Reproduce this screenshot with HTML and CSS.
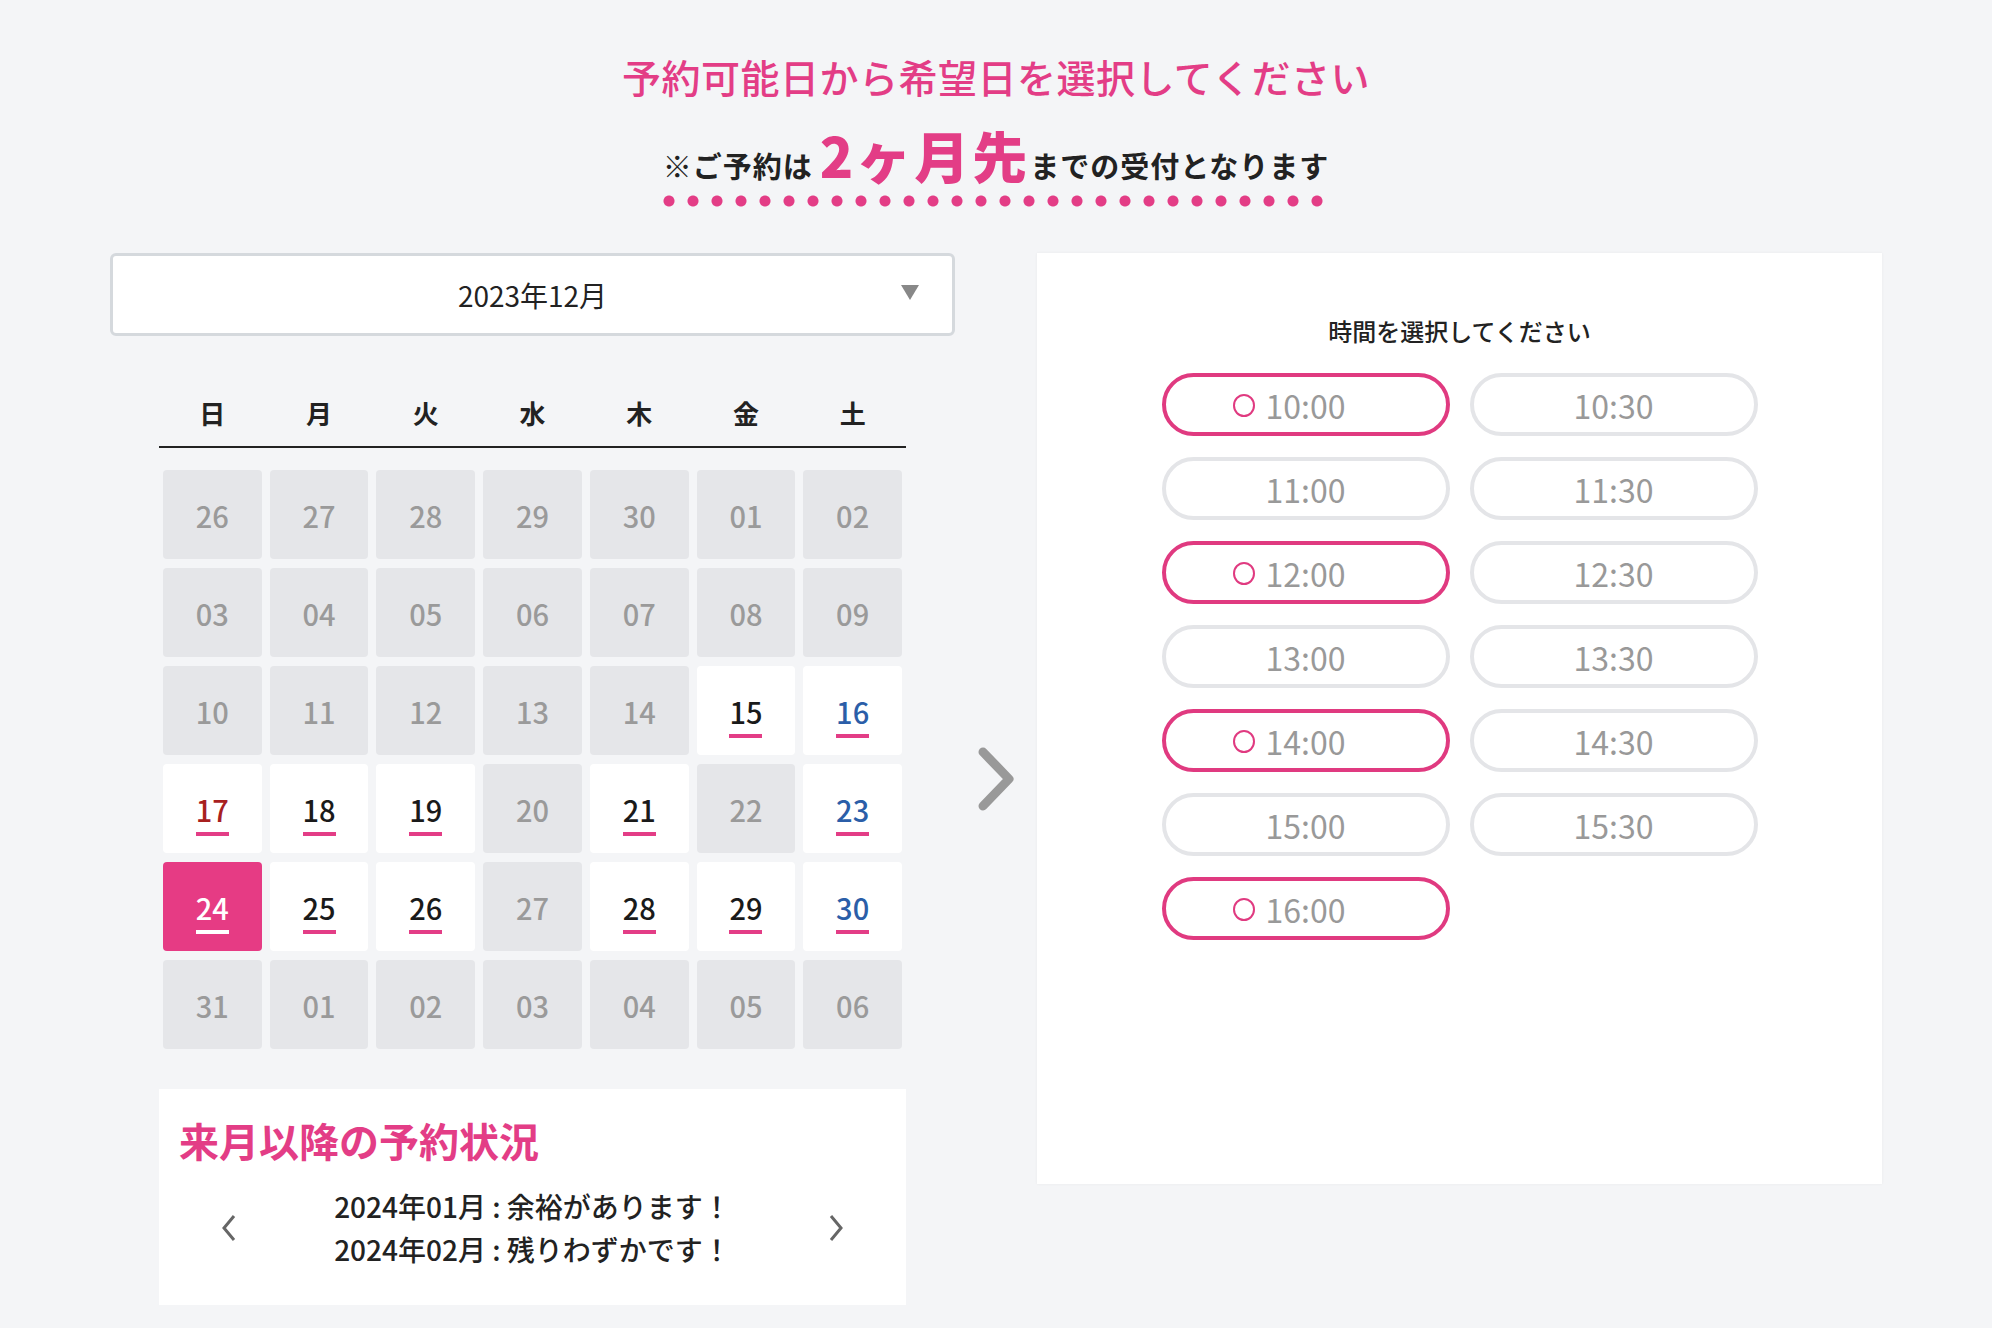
FILE: index.html
```html
<!DOCTYPE html>
<html lang="ja">
<head>
    <meta charset="UTF-8">
    <meta name="viewport" content="width=device-width, initial-scale=1.0">
    <title>予約日時の選択</title>
    <link rel="stylesheet" href="styles.css">
</head>
<body>
    <div class="page">
        <header class="intro">
            <h1>予約可能日から希望日を選択してください</h1>
            <p class="notice">※ご予約は<strong>2ヶ月先</strong>までの受付となります</p>
        </header>

        <div class="main">
            <div class="calendar-col">
                <div class="month-select">
                    2023年12月
                    <span class="caret"></span>
                </div>

                <div class="week">
                    <span>日</span><span>月</span><span>火</span><span>水</span><span>木</span><span>金</span><span>土</span>
                </div>

                <div class="days">
                    <div class="day off"><span>26</span></div>
                    <div class="day off"><span>27</span></div>
                    <div class="day off"><span>28</span></div>
                    <div class="day off"><span>29</span></div>
                    <div class="day off"><span>30</span></div>
                    <div class="day off"><span>01</span></div>
                    <div class="day off"><span>02</span></div>

                    <div class="day off"><span>03</span></div>
                    <div class="day off"><span>04</span></div>
                    <div class="day off"><span>05</span></div>
                    <div class="day off"><span>06</span></div>
                    <div class="day off"><span>07</span></div>
                    <div class="day off"><span>08</span></div>
                    <div class="day off"><span>09</span></div>

                    <div class="day off"><span>10</span></div>
                    <div class="day off"><span>11</span></div>
                    <div class="day off"><span>12</span></div>
                    <div class="day off"><span>13</span></div>
                    <div class="day off"><span>14</span></div>
                    <div class="day open"><span>15</span></div>
                    <div class="day open sat"><span>16</span></div>

                    <div class="day open sun"><span>17</span></div>
                    <div class="day open"><span>18</span></div>
                    <div class="day open"><span>19</span></div>
                    <div class="day off"><span>20</span></div>
                    <div class="day open"><span>21</span></div>
                    <div class="day off"><span>22</span></div>
                    <div class="day open sat"><span>23</span></div>

                    <div class="day open selected"><span>24</span></div>
                    <div class="day open"><span>25</span></div>
                    <div class="day open"><span>26</span></div>
                    <div class="day off"><span>27</span></div>
                    <div class="day open"><span>28</span></div>
                    <div class="day open"><span>29</span></div>
                    <div class="day open sat"><span>30</span></div>

                    <div class="day off"><span>31</span></div>
                    <div class="day off"><span>01</span></div>
                    <div class="day off"><span>02</span></div>
                    <div class="day off"><span>03</span></div>
                    <div class="day off"><span>04</span></div>
                    <div class="day off"><span>05</span></div>
                    <div class="day off"><span>06</span></div>
                </div>

                <div class="next-box">
                    <h2>来月以降の予約状況</h2>
                    <div class="next-row">
                        <svg class="small-arrow" width="16" height="30" viewBox="0 0 16 30"><polyline points="13,3 3,15 13,27" fill="none" stroke="#666" stroke-width="3"/></svg>
                        <div class="next-text">
                            <p>2024年01月 : 余裕があります！</p>
                            <p>2024年02月 : 残りわずかです！</p>
                        </div>
                        <svg class="small-arrow" width="16" height="30" viewBox="0 0 16 30"><polyline points="3,3 13,15 3,27" fill="none" stroke="#666" stroke-width="3"/></svg>
                    </div>
                </div>
            </div>

            <div class="step-arrow">
                <svg width="40" height="66" viewBox="0 0 40 66"><polyline points="7,6 33,33 7,60" fill="none" stroke="#999" stroke-width="9" stroke-linecap="round" stroke-linejoin="round"/></svg>
            </div>

            <div class="time-panel">
                <h3>時間を選択してください</h3>
                <div class="times">
                    <div class="time ok"><span>10:00</span></div>
                    <div class="time"><span>10:30</span></div>
                    <div class="time"><span>11:00</span></div>
                    <div class="time"><span>11:30</span></div>
                    <div class="time ok"><span>12:00</span></div>
                    <div class="time"><span>12:30</span></div>
                    <div class="time"><span>13:00</span></div>
                    <div class="time"><span>13:30</span></div>
                    <div class="time ok"><span>14:00</span></div>
                    <div class="time"><span>14:30</span></div>
                    <div class="time"><span>15:00</span></div>
                    <div class="time"><span>15:30</span></div>
                    <div class="time ok"><span>16:00</span></div>
                </div>
            </div>
        </div>
    </div>
</body>
</html>
```

FILE: styles.css
```css
body {
    font-family: "Noto Sans CJK JP", "Noto Sans", sans-serif;
    background-color: #f4f5f7;
    color: #222;
    margin: 0;
    padding: 0;
}

.page {
    width: 1772px;
    margin: 0 auto;
}

/* header */

.intro {
    text-align: center;
    padding-top: 48px;
}

.intro h1 {
    margin: 0;
    font-size: 39px;
    line-height: 56px;
    font-weight: 500;
    color: #e33d86;
    letter-spacing: 0.5px;
}

.notice {
    display: inline-block;
    margin: 19px 0 0;
    font-size: 29px;
    font-weight: 700;
    line-height: 62px;
    letter-spacing: 1px;
    padding-bottom: 11px;
    background-image: radial-gradient(circle, #e33d86 5px, transparent 6px);
    background-size: 24px 12px;
    background-position: -6px bottom;
    background-repeat: repeat-x;
}

.notice strong {
    font-size: 55px;
    color: #e33d86;
    letter-spacing: 3px;
    margin-left: 7px;
}

/* layout */

.main {
    display: grid;
    grid-template-columns: 845px 1fr 845px;
    align-items: start;
    margin-top: 46px;
}

/* calendar */

.month-select {
    position: relative;
    height: 83px;
    box-sizing: border-box;
    background-color: #fff;
    border: 3px solid #d5d9dd;
    border-radius: 6px;
    display: flex;
    align-items: center;
    justify-content: center;
    font-size: 28px;
}

.caret {
    position: absolute;
    right: 33px;
    top: 29px;
    width: 0;
    height: 0;
    border-left: 9px solid transparent;
    border-right: 9px solid transparent;
    border-top: 15px solid #888;
}

.week,
.days {
    display: grid;
    grid-template-columns: repeat(7, 1fr);
    column-gap: 8px;
    margin: 0 49px;
    padding: 0 4px;
}

.week {
    margin-top: 58px;
    padding-bottom: 14px;
    border-bottom: 2px solid #222;
    text-align: center;
    font-size: 26px;
    line-height: 38px;
    font-weight: 700;
}

.days {
    margin-top: 22px;
    grid-auto-rows: 89px;
    row-gap: 9px;
}

.day {
    border-radius: 4px;
    display: flex;
    justify-content: center;
    align-items: flex-start;
    padding-top: 27px;
    box-sizing: border-box;
}

.day span {
    font-size: 29px;
    line-height: 36px;
    font-weight: 500;
    padding-bottom: 5px;
    border-bottom: 4px solid transparent;
    min-width: 32px;
    text-align: center;
}

.day.off {
    background-color: #e5e6e9;
    color: #9a9a9a;
}

.day.open {
    background-color: #fff;
    color: #1a1a1a;
}

.day.open span {
    border-bottom-color: #e33d86;
}

.day.sun {
    color: #a8201f;
}

.day.sat {
    color: #2b5ea8;
}

.day.selected {
    background-color: #e63b84;
    color: #fff;
}

.day.selected span {
    border-bottom-color: #fff;
}

/* next months */

.next-box {
    margin: 40px 49px 0;
    background-color: #fff;
    padding: 24px 20px 34px;
}

.next-box h2 {
    margin: 0;
    font-size: 40px;
    line-height: 54px;
    font-weight: 700;
    color: #e33d86;
}

.next-row {
    display: flex;
    align-items: center;
    justify-content: space-between;
    margin-top: 18px;
    padding: 0 42px;
}

.next-text p {
    margin: 0;
    font-size: 28px;
    line-height: 43px;
    font-weight: 500;
}

.small-arrow {
    display: block;
}

/* arrow between columns */

.step-arrow {
    align-self: center;
    display: flex;
    justify-content: center;
}

/* time panel */

.time-panel {
    background-color: #fff;
    height: 931px;
    box-sizing: border-box;
    padding-top: 60px;
    box-shadow: 0 0 3px rgba(0, 0, 0, 0.05);
}

.time-panel h3 {
    margin: 0;
    text-align: center;
    font-size: 24px;
    line-height: 36px;
    font-weight: 500;
}

.times {
    display: grid;
    grid-template-columns: 288px 288px;
    column-gap: 20px;
    row-gap: 21px;
    justify-content: center;
    margin-top: 24px;
}

.time {
    height: 63px;
    box-sizing: border-box;
    border: 4px solid #e4e5e8;
    border-radius: 32px;
    display: flex;
    align-items: center;
    justify-content: center;
    color: #999;
    font-size: 32px;
}

.time span {
    position: relative;
}

.time.ok {
    border-color: #e03a80;
}

.time.ok span::before {
    content: "";
    position: absolute;
    right: 100%;
    top: 50%;
    margin-right: 11px;
    margin-top: -11px;
    width: 18px;
    height: 19px;
    border: 2px solid #e03a80;
    border-radius: 50%;
}
```
